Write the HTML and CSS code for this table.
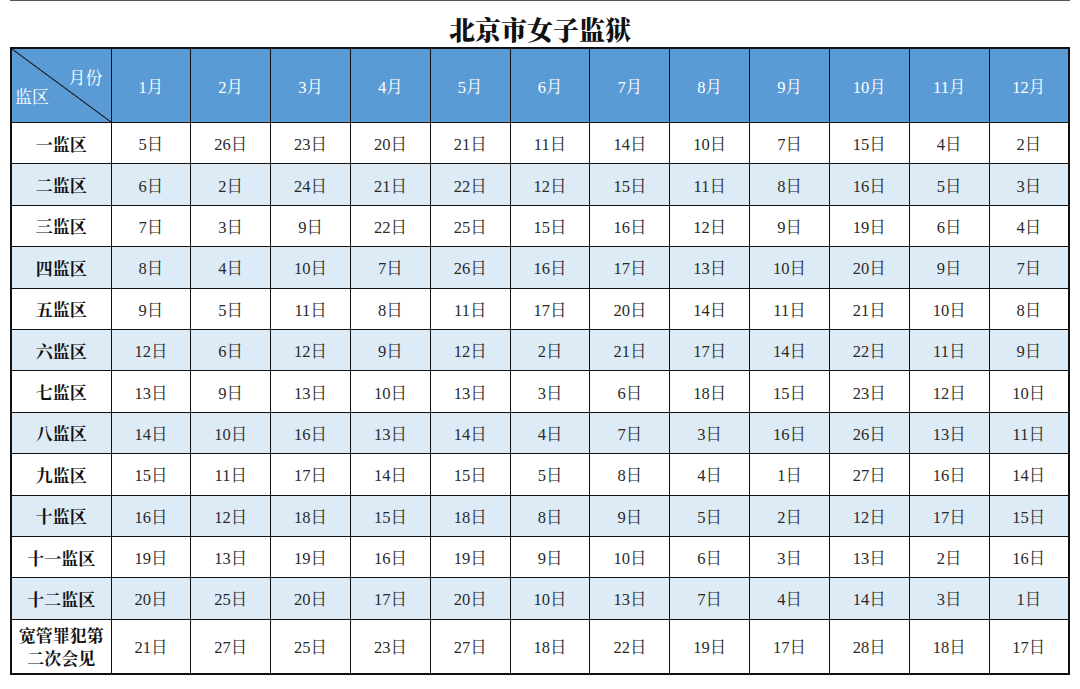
FILE: index.html
```html
<!DOCTYPE html>
<html lang="zh-CN">
<head>
<meta charset="utf-8">
<title>北京市女子监狱</title>
<link rel="stylesheet" href="styles.css">
</head>
<body>
<div class="page">
  <div class="topline"></div>
  <h1 class="title">北京市女子监狱</h1>
  <table class="sched">
    <colgroup>
      <col class="col-name">
      <col span="12">
    </colgroup>
    <thead>
      <tr>
        <th class="corner"><span class="c-month">月份</span><span class="c-area">监区</span></th>
        <th>1月</th><th>2月</th><th>3月</th><th>4月</th><th>5月</th><th>6月</th>
        <th>7月</th><th>8月</th><th>9月</th><th>10月</th><th>11月</th><th>12月</th>
      </tr>
    </thead>
    <tbody>
      <tr><td class="name">一监区</td><td>5日</td><td>26日</td><td>23日</td><td>20日</td><td>21日</td><td>11日</td><td>14日</td><td>10日</td><td>7日</td><td>15日</td><td>4日</td><td>2日</td></tr>
      <tr class="alt"><td class="name">二监区</td><td>6日</td><td>2日</td><td>24日</td><td>21日</td><td>22日</td><td>12日</td><td>15日</td><td>11日</td><td>8日</td><td>16日</td><td>5日</td><td>3日</td></tr>
      <tr><td class="name">三监区</td><td>7日</td><td>3日</td><td>9日</td><td>22日</td><td>25日</td><td>15日</td><td>16日</td><td>12日</td><td>9日</td><td>19日</td><td>6日</td><td>4日</td></tr>
      <tr class="alt"><td class="name">四监区</td><td>8日</td><td>4日</td><td>10日</td><td>7日</td><td>26日</td><td>16日</td><td>17日</td><td>13日</td><td>10日</td><td>20日</td><td>9日</td><td>7日</td></tr>
      <tr><td class="name">五监区</td><td>9日</td><td>5日</td><td>11日</td><td>8日</td><td>11日</td><td>17日</td><td>20日</td><td>14日</td><td>11日</td><td>21日</td><td>10日</td><td>8日</td></tr>
      <tr class="alt"><td class="name">六监区</td><td>12日</td><td>6日</td><td>12日</td><td>9日</td><td>12日</td><td>2日</td><td>21日</td><td>17日</td><td>14日</td><td>22日</td><td>11日</td><td>9日</td></tr>
      <tr><td class="name">七监区</td><td>13日</td><td>9日</td><td>13日</td><td>10日</td><td>13日</td><td>3日</td><td>6日</td><td>18日</td><td>15日</td><td>23日</td><td>12日</td><td>10日</td></tr>
      <tr class="alt"><td class="name">八监区</td><td>14日</td><td>10日</td><td>16日</td><td>13日</td><td>14日</td><td>4日</td><td>7日</td><td>3日</td><td>16日</td><td>26日</td><td>13日</td><td>11日</td></tr>
      <tr><td class="name">九监区</td><td>15日</td><td>11日</td><td>17日</td><td>14日</td><td>15日</td><td>5日</td><td>8日</td><td>4日</td><td>1日</td><td>27日</td><td>16日</td><td>14日</td></tr>
      <tr class="alt"><td class="name">十监区</td><td>16日</td><td>12日</td><td>18日</td><td>15日</td><td>18日</td><td>8日</td><td>9日</td><td>5日</td><td>2日</td><td>12日</td><td>17日</td><td>15日</td></tr>
      <tr><td class="name">十一监区</td><td>19日</td><td>13日</td><td>19日</td><td>16日</td><td>19日</td><td>9日</td><td>10日</td><td>6日</td><td>3日</td><td>13日</td><td>2日</td><td>16日</td></tr>
      <tr class="alt"><td class="name">十二监区</td><td>20日</td><td>25日</td><td>20日</td><td>17日</td><td>20日</td><td>10日</td><td>13日</td><td>7日</td><td>4日</td><td>14日</td><td>3日</td><td>1日</td></tr>
      <tr class="last"><td class="name">宽管罪犯第<br>二次会见</td><td>21日</td><td>27日</td><td>25日</td><td>23日</td><td>27日</td><td>18日</td><td>22日</td><td>19日</td><td>17日</td><td>28日</td><td>18日</td><td>17日</td></tr>
    </tbody>
  </table>
</div>
</body>
</html>
```
FILE: styles.css
```css
html, body {
  margin: 0;
  padding: 0;
  background: #ffffff;
}
body {
  font-family: "Liberation Serif", "Noto Serif CJK SC", "Noto Sans CJK SC", serif;
  color: #222;
}
.page {
  padding: 0 10px 0 10px;
  width: 1060px;
}
.topline {
  height: 0;
  border-top: 1px solid #555;
}
.title {
  margin: 0;
  height: 46px;
  line-height: 56px;
  font-size: 26px;
  font-weight: 900;
  text-align: center;
  color: #111;
  font-family: "Noto Serif CJK SC", "Noto Sans CJK SC", serif;
}
.sched {
  border-collapse: collapse;
  table-layout: fixed;
  width: 1060px;
  border: 2px solid #111;
}
.col-name {
  width: 100px;
}
.sched th, .sched td {
  border: 1.5px solid #111;
  text-align: center;
  padding: 0;
  font-size: 16.5px;
  font-weight: 400;
}
.sched thead th {
  background: #5b9bd5;
  color: #ffffff;
  height: 73px;
}
.sched thead th.corner {
  position: relative;
  background: linear-gradient(to top right, #5b9bd5 calc(50% - 1px), #111 50%, #5b9bd5 calc(50% + 1px));
  font-family: "Noto Serif CJK SC", "Noto Sans CJK SC", serif;
  font-size: 17px;
}
.c-month {
  position: absolute;
  right: 8px;
  top: 15px;
}
.c-area {
  position: absolute;
  left: 3px;
  bottom: 14px;
}
.sched tbody td {
  height: 40.4px;
  color: #2a2a2a;
}
.sched tbody tr.alt td {
  background: #ddebf7;
}
.sched td.name {
  font-family: "Noto Serif CJK SC", "Noto Sans CJK SC", serif;
  font-weight: 700;
  font-size: 17px;
  color: #111;
}
.sched tbody tr.last td {
  height: 53px;
}
.sched tbody tr.last td.name {
  line-height: 23px;
}
```
